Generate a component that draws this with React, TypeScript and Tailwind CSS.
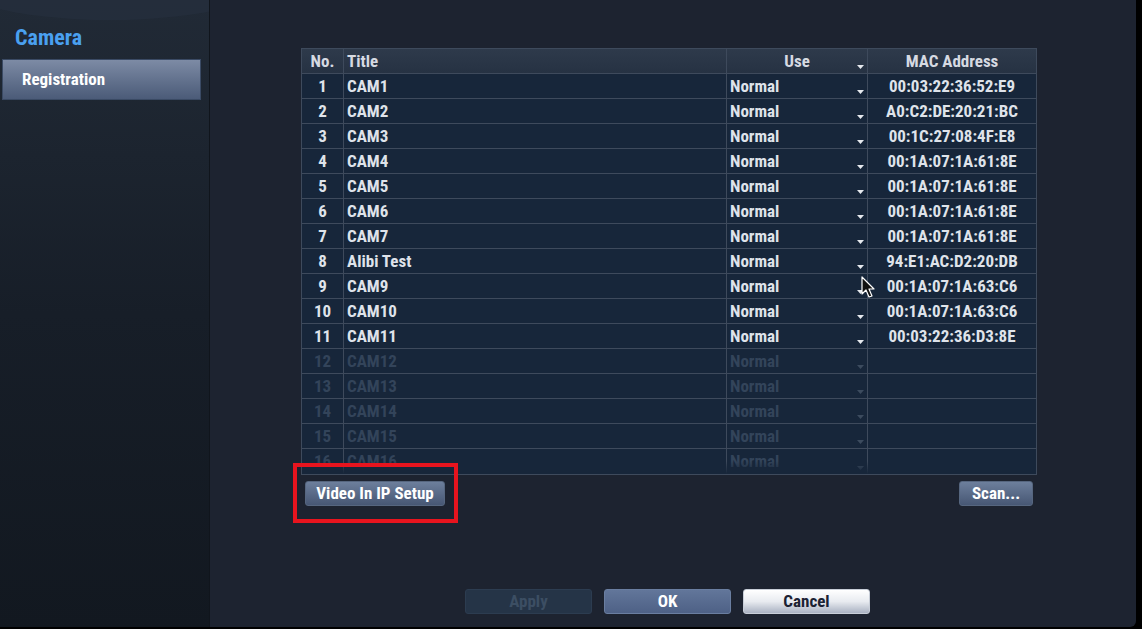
import React from 'react';

interface Cam {
  no: number;
  title: string;
  use: string;
  mac: string;
  active: boolean;
}

const macs = [
  '00:03:22:36:52:E9',
  'A0:C2:DE:20:21:BC',
  '00:1C:27:08:4F:E8',
  '00:1A:07:1A:61:8E',
  '00:1A:07:1A:61:8E',
  '00:1A:07:1A:61:8E',
  '00:1A:07:1A:61:8E',
  '94:E1:AC:D2:20:DB',
  '00:1A:07:1A:63:C6',
  '00:1A:07:1A:63:C6',
  '00:03:22:36:D3:8E',
];

const cams: Cam[] = Array.from({ length: 16 }, (_, i) => ({
  no: i + 1,
  title: i === 7 ? 'Alibi Test' : `CAM${i + 1}`,
  use: 'Normal',
  mac: macs[i] ?? '',
  active: i < 11,
}));

const font = { fontFamily: '"Liberation Sans Narrow", "Roboto Condensed", Roboto, "Liberation Sans", sans-serif' };

const Arrow: React.FC<{ dim?: boolean }> = ({ dim }) => (
  <svg width="7" height="4" viewBox="0 0 7 4" className="absolute right-[3px] bottom-[4px]">
    <path d="M0 0 H7 L3.5 4 Z" fill={dim ? '#3c4b5e' : '#e6e9ee'} />
  </svg>
);

const Btn: React.FC<{ label: string; className: string }> = ({ label, className }) => (
  <button
    className={`h-[25px] rounded-[3px] text-[17px] font-bold leading-none ${className}`}
    style={font}
  >
    {label}
  </button>
);

export default function App() {
  return (
    <div className="w-[1142px] h-[629px] bg-black flex overflow-hidden" style={font}>
      {/* Sidebar */}
      <div className="w-[210px] h-[627px] relative bg-gradient-to-b from-[#212a36] via-[#171e28] to-[#121820] border-r border-[#10151c] overflow-hidden">
        <div className="absolute -left-[60px] -top-[70px] w-[340px] h-[90px] rounded-[50%] bg-[#263040] opacity-60" />
        <div className="relative pt-[25px]">
          <div className="pl-[15px] text-[22px] font-bold text-[#4aa0f0] leading-[26px]">Camera</div>
          <div className="mt-[8px] ml-[2px] w-[199px] h-[41px] border border-[#3a4a64] bg-gradient-to-b from-[#7d8ba5] to-[#4b5b78] flex items-center pl-[19px] pt-[1px] text-[17px] font-bold text-white">
            Registration
          </div>
        </div>
      </div>

      {/* Main */}
      <div className="w-[926px] h-[627px] bg-[#1d2330] rounded-br-[6px] relative flex flex-col">
        <div className="ml-[91px] mt-[48px] w-[736px]">
          <div className="relative border border-[#3e4a5c]">
            <div className="grid grid-cols-[42px_383px_141px_168px]">
              {/* header */}
              <div className="h-[25px] pt-[1px] bg-gradient-to-b from-[#2e3a4b] to-[#263243] border-r border-b border-[#3e4a5c] flex items-center justify-center text-[17px] font-bold text-[#d6dae2]">No.</div>
              <div className="h-[25px] pt-[1px] bg-gradient-to-b from-[#2e3a4b] to-[#263243] border-r border-b border-[#3e4a5c] flex items-center pl-[3px] text-[17px] font-bold text-[#d6dae2]">Title</div>
              <div className="relative h-[25px] pt-[1px] bg-gradient-to-b from-[#2e3a4b] to-[#263243] border-r border-b border-[#3e4a5c] flex items-center justify-center text-[17px] font-bold text-[#d6dae2]">
                Use
                <Arrow />
              </div>
              <div className="h-[25px] pt-[1px] bg-gradient-to-b from-[#2e3a4b] to-[#263243] border-b border-[#3e4a5c] flex items-center justify-center text-[17px] font-bold text-[#d6dae2]">MAC Address</div>

              {cams.map((c) => {
                const txt = c.active ? 'text-[#dfe3ea]' : 'text-[#33445a]';
                const bb = c.no < 16 ? 'border-b' : '';
                return (
                  <React.Fragment key={c.no}>
                    <div className={`h-[25px] pt-[1px] bg-[#17263a] border-r ${bb} border-[#3e4a5c] flex items-center justify-center text-[17px] font-bold ${txt}`}>{c.no}</div>
                    <div className={`h-[25px] pt-[1px] bg-[#17263a] border-r ${bb} border-[#3e4a5c] flex items-center pl-[3px] text-[17px] font-bold ${txt}`}>{c.title}</div>
                    <div className={`relative h-[25px] pt-[1px] bg-[#17263a] border-r ${bb} border-[#3e4a5c] flex items-center pl-[3px] text-[17px] font-bold ${txt}`}>
                      {c.use}
                      <Arrow dim={!c.active} />
                    </div>
                    <div className={`h-[25px] pt-[1px] bg-[#17263a] ${bb} border-[#3e4a5c] flex items-center justify-center text-[17px] font-bold ${txt}`}>{c.mac}</div>
                  </React.Fragment>
                );
              })}
            </div>
            {/* scroll fade on last row */}
            <div className="absolute left-0 right-0 bottom-0 h-[13px] bg-gradient-to-b from-[#17263a]/0 to-[#17263a]" />
          </div>

          <div className="mt-[6px] flex justify-between pl-[4px] pr-[4px]">
            <Btn label="Video In IP Setup" className="w-[140px] bg-gradient-to-b from-[#6d7f9c] to-[#475774] border border-[#56667f] text-white" />
            <Btn label="Scan..." className="w-[74px] bg-gradient-to-b from-[#6d7f9c] to-[#475774] border border-[#56667f] text-white" />
          </div>
        </div>

        <div className="mt-auto mb-[13px] ml-[255px] flex gap-[12px]">
          <Btn label="Apply" className="w-[127px] bg-[#253447] border border-[#2c3c50] text-[#3c4e63]" />
          <Btn label="OK" className="w-[127px] bg-gradient-to-b from-[#62769a] to-[#4e6186] border border-[#6a7ea0] text-white" />
          <Btn label="Cancel" className="w-[127px] bg-gradient-to-b from-[#ffffff] via-[#e8ebf0] to-[#aab2c2] border border-[#c8ced8] text-[#1b2233]" />
        </div>

        {/* highlight box */}
        <div className="absolute left-[83px] top-[463px] w-[165px] h-[60px] border-[4px] border-[#e8141e]" />

        {/* mouse cursor */}
        <svg width="16" height="24" viewBox="0 0 16 24" className="absolute left-[651px] top-[276px]">
          <path d="M1 1 L1 18 L5 14 L8 21 L11 20 L8 13 L13 13 Z" fill="#111" stroke="#fff" strokeWidth="1.2" strokeLinejoin="round" />
        </svg>
      </div>
    </div>
  );
}
